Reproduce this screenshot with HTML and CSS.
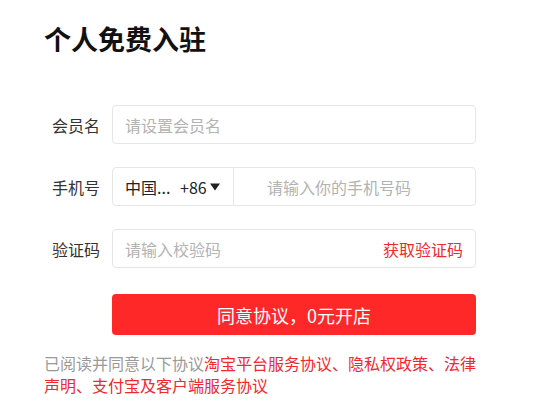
FILE: index.html
```html
<!DOCTYPE html>
<html lang="zh-CN">
<head>
<meta charset="utf-8">
<title>个人免费入驻</title>
<link rel="stylesheet" href="styles.css">
</head>
<body>
<div class="page">
  <h1 class="title">个人免费入驻</h1>
  <div class="form">
    <div class="row">
      <label class="label">会员名</label>
      <div class="field">
        <span class="placeholder">请设置会员名</span>
      </div>
    </div>
    <div class="row">
      <label class="label">手机号</label>
      <div class="field phone">
        <div class="country">
          <span class="cname">中国...</span>
          <span class="ccode">+86</span>
          <svg class="caret" width="10" height="8" viewBox="0 0 10 8"><polygon points="0,0.5 10,0.5 5,7.5" fill="#222"/></svg>
        </div>
        <span class="placeholder phone-ph">请输入你的手机号码</span>
      </div>
    </div>
    <div class="row">
      <label class="label">验证码</label>
      <div class="field code">
        <span class="placeholder">请输入校验码</span>
        <span class="getcode">获取验证码</span>
      </div>
    </div>
    <div class="row btn-row">
      <span class="label"></span>
      <button class="submit">同意协议，0元开店</button>
    </div>
  </div>
  <p class="agree">已阅读并同意以下协议<span class="link">淘宝平台服务协议、隐私权政策、法律</span><span class="link">声明、支付宝及客户端服务协议</span></p>
</div>
</body>
</html>
```

FILE: styles.css
```css
html, body {
  margin: 0;
  padding: 0;
  background: #fff;
}
body {
  font-family: "Noto Sans CJK SC", "Noto Sans", sans-serif;
  color: #333;
}
.page {
  width: 434px;
  padding: 21px 0 0 44px;
}
.title {
  margin: 0;
  font-size: 27px;
  line-height: 36px;
  font-weight: 700;
  color: #111;
}
.form {
  margin-top: 48px;
  display: flex;
  flex-direction: column;
  gap: 23px;
}
.row {
  display: flex;
  align-items: center;
  gap: 12px;
  width: 432px;
}
.label {
  width: 56px;
  flex: none;
  text-align: right;
  font-size: 16px;
  line-height: 22px;
  color: #333;
}
.field {
  flex: 1;
  height: 39px;
  box-sizing: border-box;
  border: 1px solid #e6e6e6;
  border-radius: 4px;
  display: flex;
  align-items: center;
  padding: 0 12px;
  font-size: 16px;
}
.placeholder {
  color: #b3b3b3;
  line-height: 22px;
}
.phone {
  padding: 0;
}
.country {
  width: 121px;
  height: 100%;
  box-sizing: border-box;
  border-right: 1px solid #e6e6e6;
  display: flex;
  align-items: center;
  padding-left: 12px;
  color: #222;
}
.cname {
  width: 55px;
}
.ccode {
  margin-right: 3px;
}
.caret {
  display: block;
  margin-top: 1px;
}
.phone-ph {
  padding-left: 33px;
}
.code {
  justify-content: space-between;
  padding-right: 12px;
}
.getcode {
  color: #f0292e;
  line-height: 22px;
}
.btn-row {
  margin-top: 3px;
}
.submit {
  flex: 1;
  height: 41px;
  border: none;
  border-radius: 4px;
  background: #ff2828;
  color: #fff;
  font-family: inherit;
  font-size: 18px;
  padding: 0;
  cursor: pointer;
}
.agree {
  margin: 17px 0 0;
  font-size: 16px;
  line-height: 22px;
  color: #9a9a9a;
}
.link {
  color: #f0292e;
}
```
